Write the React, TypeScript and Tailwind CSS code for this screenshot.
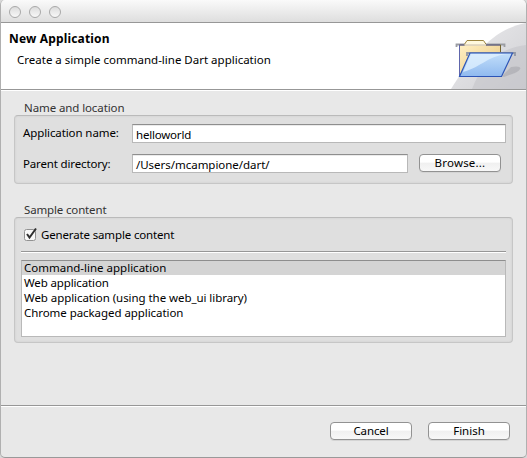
import React from "react";

function Label({ children, ls, className = "" }: { children: React.ReactNode; ls: string; className?: string }) {
  return <span className={"block whitespace-pre leading-[15px] " + ls + " " + className}>{children}</span>;
}

function PushButton({ children, ls }: { children: React.ReactNode; ls: string }) {
  return (
    <button className="flex h-[18px] w-[82px] shrink-0 items-center justify-center rounded-[4px] border border-[#929292] bg-linear-to-b from-white from-45% via-[#f0f0f0] via-50% to-[#f8f8f8] pb-px shadow-[0_1px_0_#d4d4d4]">
      <Label ls={ls}>{children}</Label>
    </button>
  );
}

function Field({ value, width, ls }: { value: string; width: string; ls: string }) {
  return (
    <div className={"h-[19px] shrink-0 border border-[#b8b8b8] border-t-[#8e8e8e] bg-white pl-[3px] pt-[2px] shadow-[inset_0_1px_0_#ebebeb] " + width}>
      <Label ls={ls}>{value}</Label>
    </div>
  );
}

const group = "rounded-[4px] border border-[#c6c6c6] border-t-[#bababa] bg-[#dfdfdf] shadow-[inset_0_0_2px_#c8c8c8]";

function FolderArt() {
  return (
    <svg width="118" height="66" viewBox="408 23 118 66" className="block">
      <defs>
        <linearGradient id="sweep" x1="0" y1="0" x2="1" y2="1">
          <stop offset="0" stopColor="#ececee" />
          <stop offset="1" stopColor="#cfcfd3" />
        </linearGradient>
        <linearGradient id="manila" x1="0" y1="0" x2="1" y2="1">
          <stop offset="0" stopColor="#fff0c4" />
          <stop offset="1" stopColor="#e8c47c" />
        </linearGradient>
        <linearGradient id="blue" x1="0" y1="0" x2="0" y2="1">
          <stop offset="0" stopColor="#c3dffa" />
          <stop offset="1" stopColor="#8fb9ef" />
        </linearGradient>
      </defs>
      <path d="M526 23C492 29 470 59 451 89H526Z" fill="url(#sweep)" />
      <path d="M526 45C499 48 481 64 472 89H526Z" fill="#c4c4c9" opacity=".6" />
      <path d="M502 76L511 67C522 65 523 69 515 73L504 77Z" fill="#a4a4aa" opacity=".55" />
      <path d="M456.500 47V44.500H504.500V47" fill="none" stroke="#9b9da3" strokeWidth="1.800" />
      <path d="M459.500 76V45H500.500V76Z" fill="url(#manila)" stroke="#75652f" />
      <path d="M464 45L467 40.500H483.500L486.500 45Z" fill="#fff9df" stroke="#9c8540" />
      <path d="M459.500 76V45H500" fill="none" stroke="#6066ac" />
      <path d="M464.500 45H486" stroke="#fff3d0" strokeWidth="1.500" />
      <path d="M467 56V53H515V56" fill="none" stroke="#9298a5" strokeWidth="1.800" />
      <path d="M459.500 76.500L470 53H512.500L501.500 76.500Z" fill="url(#blue)" stroke="#2c54b6" strokeWidth="1.200" />
      <path d="M463 72L471 54H510C488 55 482 67 463 72Z" fill="#e2f1ff" opacity=".75" />
    </svg>
  );
}

export default function App() {
  const items = [
    { text: "Command-line application", ls: "tracking-[0px]" },
    { text: "Web application", ls: "tracking-[-0.13px]" },
    { text: "Web application (using the web_ui library)", ls: "tracking-[-0.06px]" },
    { text: "Chrome packaged application", ls: "tracking-[-0.06px]" },
  ];
  return (
    <div className="h-[458px] w-[527px] bg-[#d8d8d8] font-['Noto_Sans',sans-serif] text-[11.5px] text-black">
      <main className="flex h-[458px] w-[527px] flex-col overflow-hidden rounded-[5px] border border-t-0 border-[#b0b0b0] border-b-[#999] bg-[#e8e8e8]">
        <div className="flex h-[23px] shrink-0 items-center gap-[8px] border-b border-[#979797] bg-linear-to-b from-[#fafafa] to-[#dedede] pl-[8px] pt-[2px]">
          {[0, 1, 2].map((i) => (
            <i key={i} className="size-[12px] rounded-full border border-[#a8a8a8] bg-linear-to-b from-[#dcdcdc] to-[#f8f8f8]" />
          ))}
        </div>
        <header className="flex h-[67px] shrink-0 justify-between border-b border-[#979797] bg-white">
          <div className="pl-[8px] pt-[8px]">
            <Label ls="tracking-[0.17px]" className="text-[12px] font-bold">New Application</Label>
            <Label ls="tracking-[0px]" className="ml-[8px] mt-[6px]">Create a simple command-line Dart application</Label>
          </div>
          <FolderArt />
        </header>
        <section className="h-[315px] shrink-0 border-t border-white px-[13px] pt-[9px]">
          <Label ls="tracking-[-0.1px]" className="h-[15px] pl-[10px] text-[#333]">Name and location</Label>
          <div className={"flex h-[69px] flex-col gap-[11px] pl-[8px] pt-[8px] " + group}>
            <div className="flex">
              <Label ls="tracking-[-0.1px]" className="w-[109px] pt-[1px]">Application name:</Label>
              <Field value="helloworld" width="w-[374px]" ls="tracking-[-0.2px]" />
            </div>
            <div className="flex">
              <Label ls="tracking-[-0.15px]" className="w-[109px] pt-[2px]">Parent directory:</Label>
              <Field value="/Users/mcampione/dart/" width="w-[276px]" ls="tracking-[-0.03px]" />
              <div className="ml-[11px]"><PushButton ls="tracking-[0.2px]">Browse...</PushButton></div>
            </div>
          </div>
          <Label ls="tracking-[-0.15px]" className="mt-[18px] h-[15px] pl-[10px] text-[#333]">Sample content</Label>
          <div className={"h-[126px] px-[6px] pt-[9px] " + group}>
            <div className="flex h-[24px] gap-[3px] pl-[3px]">
              <svg width="14" height="15" viewBox="0 0 14 15" className="shrink-0">
                <rect x=".5" y="2.500" width="11" height="11" rx="2" fill="#f8f8f8" stroke="#929292" />
                <path d="M3 7L5.500 10.500L12 1.500" fill="none" stroke="#303030" strokeWidth="2" />
              </svg>
              <Label ls="tracking-[-0.15px]">Generate sample content</Label>
            </div>
            <div className="h-[2px] border-b border-t border-b-white border-t-[#979797]" />
            <ul className="mt-[7px] h-[77px] border border-[#b9b9b9] border-t-[#8e8e8e] bg-white">
              {items.map((item, i) => (
                <li key={item.text} className={"flex pl-[2px] " + (i === 0 ? "h-[14px] bg-[#d4d4d4]" : "h-[15px]")}>
                  <Label ls={item.ls} className={i === 0 ? "-mt-px" : ""}>{item.text}</Label>
                </li>
              ))}
            </ul>
          </div>
        </section>
        <footer className="flex flex-1 justify-end gap-[16px] border-t border-[#979797] pr-[16px] pt-[16px] shadow-[inset_0_1px_0_white]">
          <PushButton ls="tracking-[-0.1px]">Cancel</PushButton>
          <PushButton ls="tracking-[0px]">Finish</PushButton>
        </footer>
      </main>
    </div>
  );
}
